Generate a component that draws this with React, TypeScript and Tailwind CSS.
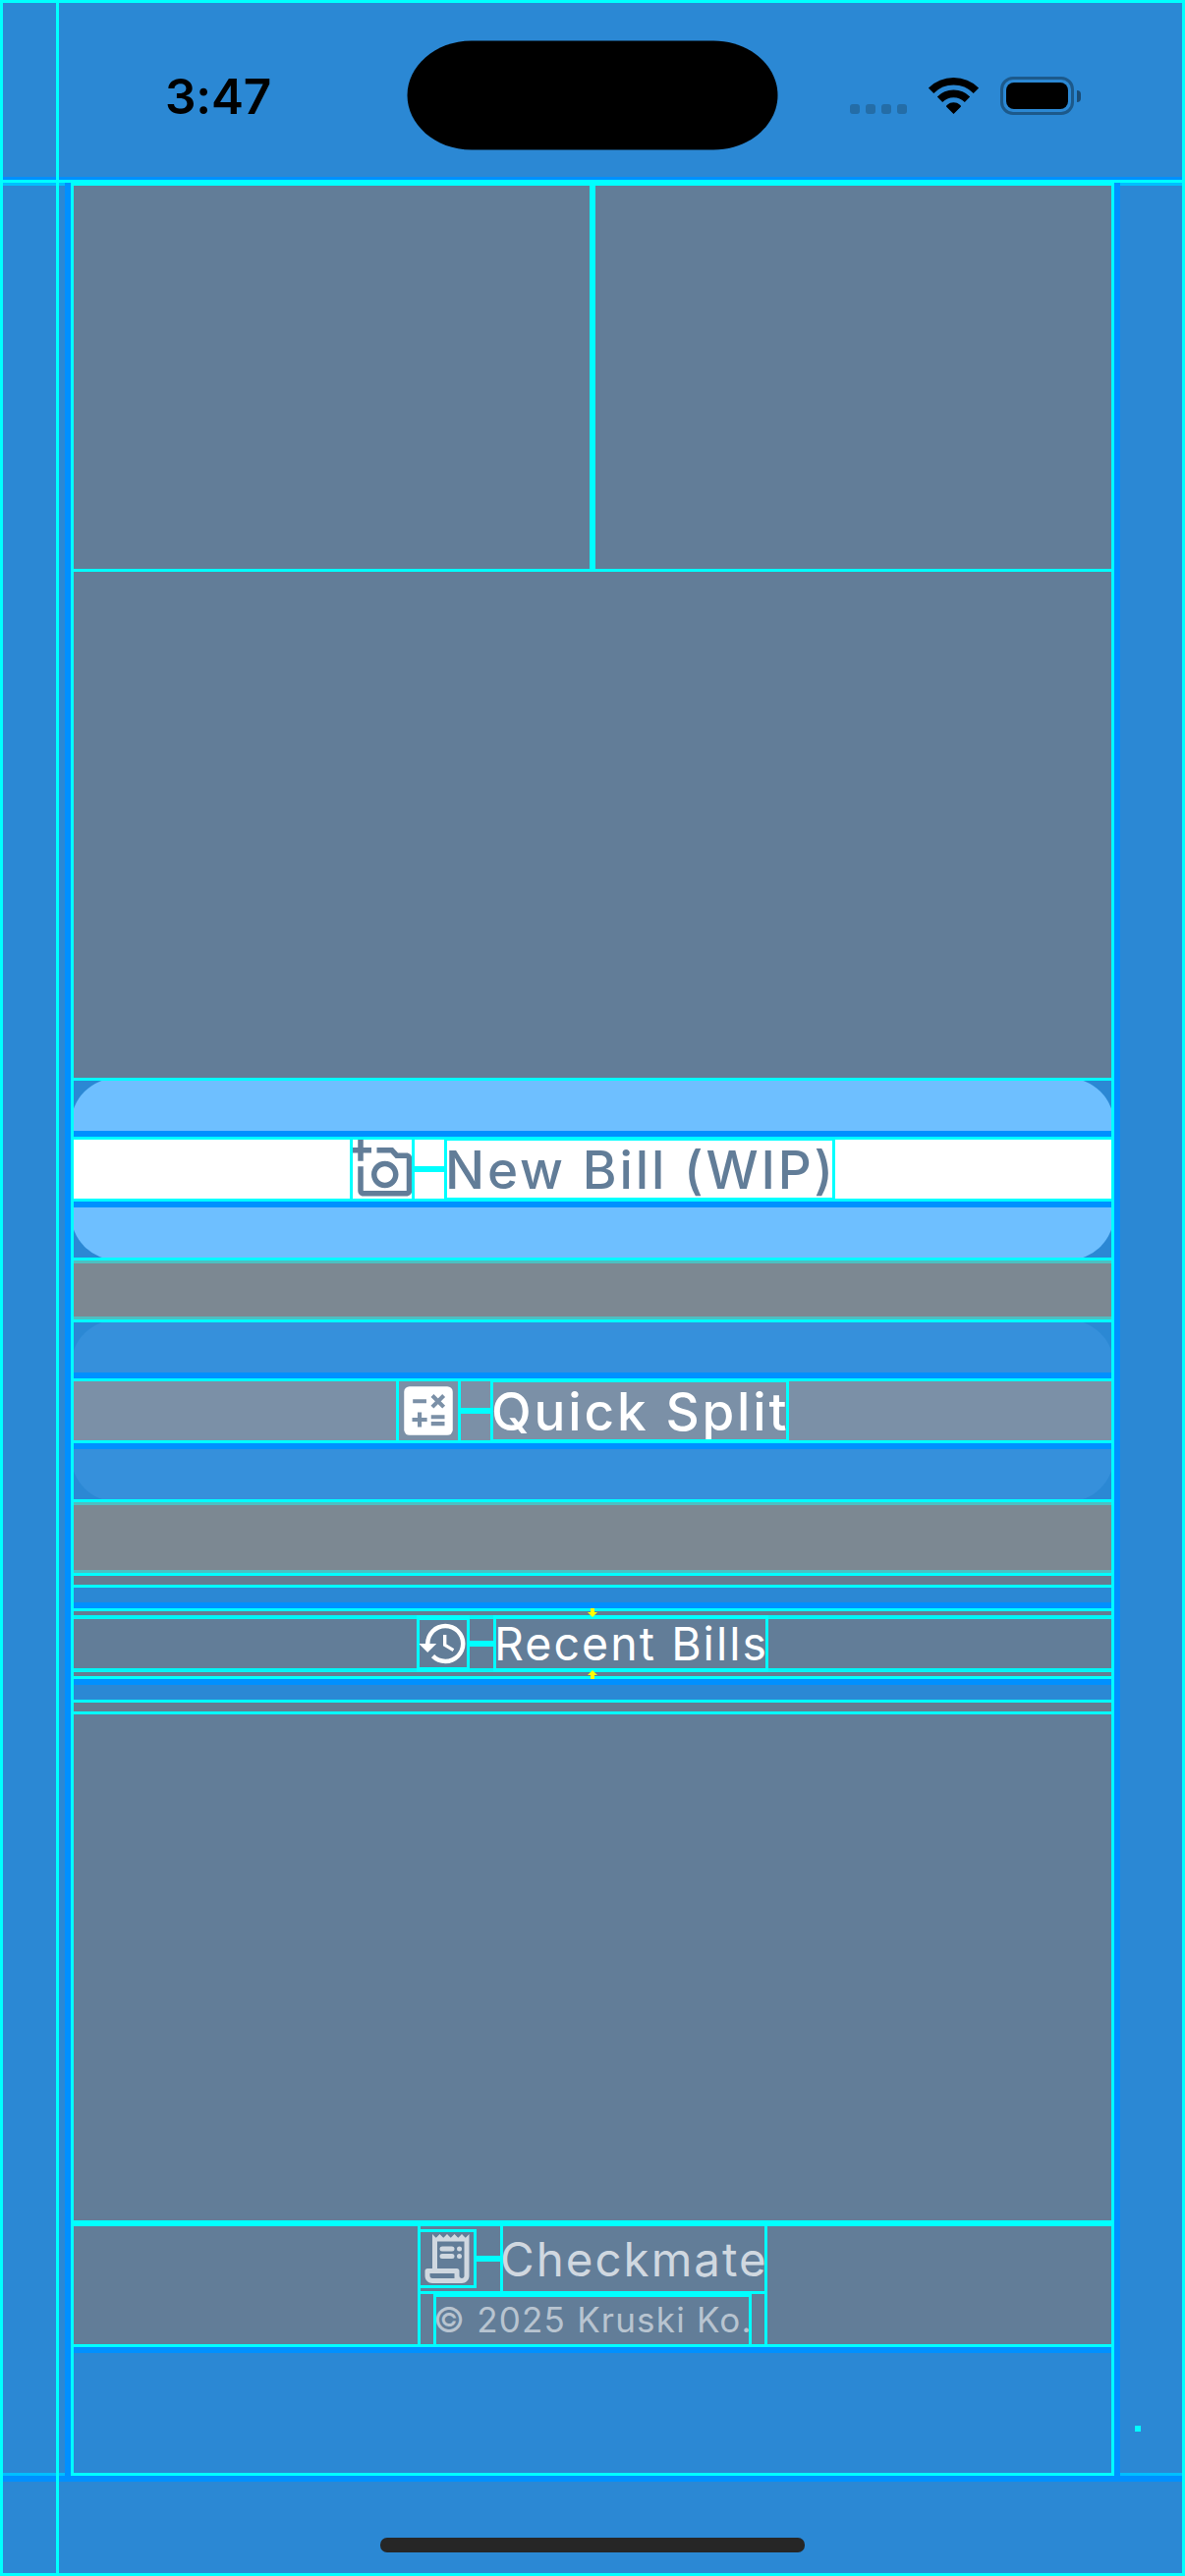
import React from "react";

type BandProps = { h: string; c: string };
const Band = ({ h, c }: BandProps) => <div className={`w-full shrink-0 ${h} ${c}`} />;

const GRAY = "bg-[#627d98]";
const WARM = "bg-[#667b91]";
const MUTED = "bg-[#7c8892]";
const TEAL = "bg-[#4ebfc2]";
const CYAN = "bg-[#00ffff]";
const EDGE = "bg-[#0090ff]";

function StatusBar() {
  return (
    <div className="flex h-[177px] shrink-0 items-start text-black">
      <div className="mt-[62px] ml-[165px] w-[112px] text-[49.5px] leading-[66px] font-semibold tracking-[-0.2px] whitespace-nowrap">
        3:47
      </div>
      <svg className="mt-[38px] ml-[134px]" width="378" height="112" viewBox="0 0 378 112">
        <path d="M66 .5H312C350 .5 377.5 27 377.5 56S350 111.500 312 111.500H66C28 111.500 .5 85 .5 56S28 .5 66 .5Z" />
      </svg>
      <div className="mt-[103px] ml-[73px] flex gap-[6px]">
        {[0, 1, 2, 3].map((i) => (
          <div key={i} className="size-[10px] rounded-[3px] bg-[#246da7]" />
        ))}
      </div>
      <svg className="mt-[76px] ml-[22px]" width="51" height="37" viewBox="0 0 51 37">
        <g fill="none" stroke="#000" strokeWidth="7.600">
          <path d="M2.600 13.300A32.400 32.400 0 0 1 48.400 13.300" />
          <path d="M11.500 22.200A19.800 19.800 0 0 1 39.500 22.200" />
        </g>
        <path d="M25.500 37 18 29.500Q18 28.500 19 27.800C22.500 24.500 28.500 24.500 32 27.800Q33 28.500 33 29.500Z" />
      </svg>
      <div className="mt-[75px] ml-[22px] flex items-center">
        <div className="h-[39px] w-[75px] rounded-[13px] border-[3px] border-[#1c598b] p-[3px]">
          <div className="h-full w-full rounded-[8px] bg-black" />
        </div>
        <div className="ml-[3px] h-[12px] w-[4px] rounded-r-full bg-[#1a4c76]" />
      </div>
    </div>
  );
}

function Connector({ w }: { w: string }) {
  return <div className={`h-[6px] shrink-0 self-center bg-[#00ffff] ${w}`} />;
}

function ButtonLabel({
  bg,
  textClass,
  width,
  icon,
  label,
}: {
  bg: string;
  textClass: string;
  width: string;
  icon: React.ReactNode;
  label: string;
}) {
  return (
    <div className={`flex h-[66px] w-full shrink-0 justify-center border-y-[3px] border-[#00ffff] ${bg}`}>
      <div className="-my-[3px] flex h-[66px]">
        <div className="relative size-[66px]">
          {icon}
          <div className="absolute inset-0 border-[3px] border-[#00ffff]" />
        </div>
        <Connector w="w-[30px]" />
        <div className={`relative h-[66px] whitespace-nowrap ${width}`}>
          <div className={`pl-[1px] text-[53px] leading-[68px] font-medium ${textClass}`}>{label}</div>
          <div className="absolute inset-0 border-x-[3px] border-y-4 border-[#00ffff]" />
        </div>
      </div>
    </div>
  );
}

function ActionButton({ fill, children }: { fill: string; children: React.ReactNode }) {
  return (
    <div className="relative -mx-[3px] flex h-[186px] shrink-0 flex-col">
      <div className={`flex h-full flex-col rounded-[48px] pt-[54px] ${fill}`}>
        <Band h="h-[6px]" c={EDGE} />
        {children}
        <Band h="h-[6px]" c={EDGE} />
      </div>
      <div className="absolute inset-0 border-[3px] border-[#00ffff]" />
    </div>
  );
}

const AddPhoto = () => (
  <svg viewBox="0 0 24 24" width="66" height="66" fill="#627d98">
    <path d="M21 6h-3.170L16 4h-6v2h5.120l1.830 2H21v12H5v-9H3v9c0 1.100.9 2 2 2h16c1.100 0 2-.9 2-2V8c0-1.100-.9-2-2-2zM8 14c0 2.760 2.240 5 5 5s5-2.240 5-5-2.240-5-5-5-5 2.240-5 5zm5-3c1.650 0 3 1.350 3 3s-1.350 3-3 3-3-1.350-3-3 1.350-3 3-3zM5 6h3V4H5V1H3v3H0v2h3v3h2z" />
  </svg>
);

const Calculate = () => (
  <svg viewBox="0 0 24 24" width="66" height="66">
    <rect x="3" y="3" width="18" height="18" rx="2" fill="#fff" />
    <g stroke="#7b90a7" strokeWidth="1.500">
      <path d="M6.250 8.470h5M6 15.250h5.500M8.750 12.500v5.500M13 14.250h5M13 16.750h5M13.440 6.350l4.250 4.250M17.690 6.350l-4.250 4.250" />
    </g>
  </svg>
);

const History = () => (
  <svg viewBox="0 0 24 24" width="54" height="54" fill="#fff">
    <path d="M13 3a9 9 0 0 0-9 9H1l3.890 3.890.07.14L9 12H6c0-3.870 3.130-7 7-7s7 3.130 7 7-3.130 7-7 7c-1.930 0-3.680-.79-4.940-2.060l-1.420 1.420A8.954 8.954 0 0 0 13 21a9 9 0 0 0 0-18zm-1 5v5l4.280 2.540.72-1.210-3.500-2.080V8H12z" />
  </svg>
);

const Receipt = () => (
  <svg viewBox="0 0 24 24" width="60" height="60" fill="#d0d8e0">
    <path d="M19.500 3.500 18 2l-1.500 1.500L15 2l-1.500 1.500L12 2l-1.500 1.500L9 2 7.500 3.500 6 2v14H4c-.55 0-1 .45-1 1v2c0 1.660 1.340 3 3 3h12c1.660 0 3-1.340 3-3V2l-1.500 1.500zM15 20H6c-.55 0-1-.45-1-1v-1h10v2zm4-1c0 .55-.45 1-1 1s-1-.45-1-1v-2c0-.55-.45-1-1-1H8V5h11v14z" />
    <rect x="9" y="7" width="6" height="2" rx="1" />
    <rect x="9" y="10" width="6" height="2" rx="1" />
    <circle cx="17" cy="8" r="1" />
    <circle cx="17" cy="11" r="1" />
  </svg>
);

function RecentBills() {
  return (
    <div className="relative flex shrink-0 flex-col">
      <Band h="h-[3px]" c={CYAN} />
      <Band h="h-[4px]" c={WARM} />
      <div className="flex h-[58px] justify-center border-y-4 border-[#00f4f6] bg-[#627d98]">
        <div className="-my-1 flex h-[58px]">
          <div className="relative h-[58px] w-[54px]">
            <div className="pt-[2px]">
              <History />
            </div>
            <div className="absolute inset-0 border-x-[3px] border-y-[5px] border-[#00ffff]" />
          </div>
          <Connector w="w-[24px]" />
          <div className="relative h-[58px] w-[280px] whitespace-nowrap">
            <div className="pl-px text-[46.500px] leading-[59px] tracking-[2.050px] text-white">
              Recent Bills
            </div>
            <div className="absolute inset-0 border-x-[3px] border-y-4 border-[#00ffff]" />
          </div>
        </div>
      </div>
      <Band h="h-[4px]" c={WARM} />
      <Band h="h-[3px]" c={CYAN} />
      <svg className="absolute top-0 left-[523px]" width="10" height="9" viewBox="0 0 10 9" fill="#ff0">
        <path d="M3 0h4v4h3L5 9 0 4h3z" />
      </svg>
      <svg className="absolute bottom-0 left-[523px]" width="10" height="9" viewBox="0 0 10 9" fill="#ff0">
        <path d="M3 9h4V5h3L5 0 0 5h3z" />
      </svg>
    </div>
  );
}

function Footer() {
  return (
    <div className="flex h-[123px] shrink-0 justify-center border-b-[3px] border-[#00ffff] bg-[#627d98]">
      <div className="flex w-[356px] flex-col items-center border-x-[3px] border-[#00ffff]">
        <div className="-mx-[3px] flex h-[66px] w-[356px] shrink-0 items-center">
          <div className="relative size-[60px]">
            <Receipt />
            <div className="absolute inset-0 border-[3px] border-[#00ffff]" />
          </div>
          <Connector w="w-[24px]" />
          <div className="relative h-[66px] w-[272px] whitespace-nowrap">
            <div className="text-[47.500px] leading-[67px] tracking-[2px] text-[#d0d8e0]">Checkmate</div>
            <div className="absolute inset-0 border-x-[3px] border-[#00ffff]" />
          </div>
        </div>
        <Band h="h-[3px]" c={CYAN} />
        <div className="relative h-[51px] w-[324px] shrink-0 whitespace-nowrap">
          <div className="text-[35px] leading-[53px] tracking-[1.200px] text-[#b8c4d0]">© 2025 Kruski Ko.</div>
          <div className="absolute inset-0 border-x-[3px] border-t-[3px] border-[#00ffff]" />
        </div>
      </div>
    </div>
  );
}

export default function App() {
  return (
    <div className="relative flex h-[2622px] w-[1206px] flex-col overflow-hidden border-[3px] border-[#00ffff] bg-[#2b88d4] font-['Inter',sans-serif]">
      <StatusBar />
      <Band h="h-[3px]" c={EDGE} />
      <Band h="h-[3px]" c={CYAN} />
      <div className="flex h-[2334px] shrink-0">
        <div className="w-[63px] border-y-[3px] border-[#00bfff]" />
        <div className="w-[6px] bg-[#0090ff]" />
        <div className="flex w-[1062px] flex-col border-[3px] border-[#00ffff]">
          <div className="flex h-[390px] shrink-0">
            <div className="flex-1 border-r-[3px] border-[#00ffff] bg-[#627d98]" />
            <div className="flex-1 border-l-[3px] border-[#00ffff] bg-[#627d98]" />
          </div>
          <Band h="h-[3px]" c={CYAN} />
          <Band h="h-[515px]" c={GRAY} />
          <ActionButton fill="bg-[#6ebfff]">
            <ButtonLabel
              bg="bg-white"
              textClass="text-[#627d98] tracking-[2.85px]"
              width="w-[398px]"
              icon={<AddPhoto />}
              label="New Bill (WIP)"
            />
          </ActionButton>
          <Band h="h-[3px]" c={TEAL} />
          <Band h="h-[54px]" c={MUTED} />
          <Band h="h-[3px]" c={TEAL} />
          <ActionButton fill="bg-[#3690db]">
            <ButtonLabel
              bg="bg-[#7b90a7]"
              textClass="text-white tracking-[2.85px]"
              width="w-[304px]"
              icon={<Calculate />}
              label="Quick Split"
            />
          </ActionButton>
          <Band h="h-[3px]" c={TEAL} />
          <Band h="h-[66px]" c={MUTED} />
          <Band h="h-[3px]" c={TEAL} />
          <Band h="h-[3px]" c={CYAN} />
          <Band h="h-[9px]" c={WARM} />
          <Band h="h-[3px]" c={CYAN} />
          <Band h="h-[15px]" c="bg-[#2b88d4]" />
          <Band h="h-[6px]" c={EDGE} />
          <RecentBills />
          <Band h="h-[6px]" c={EDGE} />
          <Band h="h-[15px]" c="bg-[#2b88d4]" />
          <Band h="h-[3px]" c={CYAN} />
          <Band h="h-[9px]" c={WARM} />
          <Band h="h-[3px]" c={CYAN} />
          <Band h="h-[515px]" c={GRAY} />
          <Band h="h-[6px]" c={CYAN} />
          <Footer />
          <Band h="h-[6px]" c={EDGE} />
        </div>
        <div className="w-[6px] bg-[#0090ff]" />
        <div className="w-[63px] border-y-[3px] border-[#00bfff]" />
      </div>
      <Band h="h-[6px]" c={EDGE} />
      <div className="mt-[57px] h-[15px] w-[432px] shrink-0 self-center rounded-[7px] bg-[#262626]" />
      <div className="absolute inset-y-0 left-[54px] w-[3px] bg-[#00ffff]" />
      <div className="absolute top-[2466px] left-[1152px] size-[6px] bg-[#00ffff]" />
    </div>
  );
}
